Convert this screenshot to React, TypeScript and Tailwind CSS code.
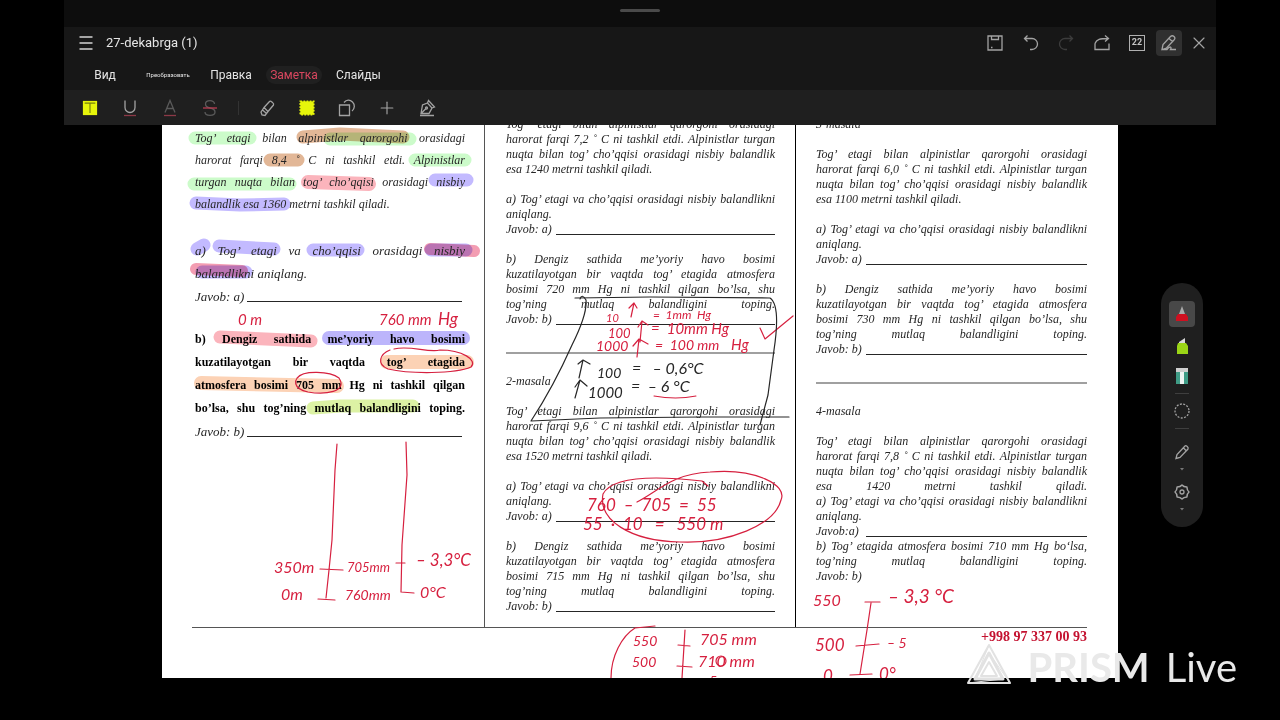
import type { ReactNode } from "react";
import { Plus, X } from "lucide-react";

const MENU = [
  { label: "Вид", className: "w-[42px] text-xs text-neutral-200" },
  { label: "Преобразовать", className: "w-[84px] text-[6px] text-neutral-200" },
  { label: "Правка", className: "w-[42px] text-xs text-neutral-200" },
  { label: "Заметка", className: "w-[84px] text-xs text-[#d9475f]" },
  { label: "Слайды", className: "w-[42px] text-xs text-neutral-200" },
];

function Icon({ children, size = 18 }: { children: ReactNode; size?: number }) {
  return (
    <svg
      width={size}
      height={size}
      viewBox="0 0 18 18"
      fill="none"
      stroke="currentColor"
      strokeWidth="1.3"
      className="shrink-0"
      aria-hidden="true"
    >
      {children}
    </svg>
  );
}

function ToolButton({ label, children, className = "" }: { label: string; children: ReactNode; className?: string }) {
  return (
    <button
      type="button"
      aria-label={label}
      className={`flex size-[26px] shrink-0 items-center justify-center rounded-sm ${className}`}
    >
      {children}
    </button>
  );
}

function Header() {
  return (
    <header className="mx-16 shrink-0 font-['Roboto',sans-serif] text-[#a3a3a3]">
      <div className="flex h-[27px] justify-center bg-[#0d0d0d] pt-[9px]">
        <span className="h-[3px] w-10 rounded-full bg-[#4a4a4a]" />
      </div>

      <div className="flex h-8 items-center bg-[#171717] pr-1 pl-[9px]">
        <ToolButton label="Menu" className="text-[#d4d4d4]">
          <Icon>
            <path d="M2.500 3h13M2.500 9h13M2.500 15h13" strokeWidth="1.5" />
          </Icon>
        </ToolButton>
        <h1 className="ml-[7px] text-[13px] text-neutral-200">27-dekabrga (1)</h1>

        <div className="ml-auto flex w-[168px] justify-between">
          <ToolButton label="Save">
            <Icon>
              <path d="M2 2h14v14H2zM5.500 2v3.500h7V2M5 13.500h1.500" />
            </Icon>
          </ToolButton>
          <ToolButton label="Undo">
            <Icon>
              <path d="M5.500 1.500L2.500 4.500l3 3M2.500 4.500h7.500a5.500 5.500 0 0 1 0 11H8" />
            </Icon>
          </ToolButton>
          <ToolButton label="Redo" className="text-[#3c3c3c]">
            <Icon>
              <path d="M12.500 1.500l3 3-3 3M15.500 4.500H8a5.500 5.500 0 0 0 0 11h2" />
            </Icon>
          </ToolButton>
          <ToolButton label="Share">
            <Icon>
              <path d="M2 9.500v6h14v-6M2 9.500C3.500 5 7 4.500 15 4.500M12 1.500l3.500 3L12 7.500" />
            </Icon>
          </ToolButton>
          <ToolButton label="Pages">
            <span className="flex size-4 items-center justify-center border border-[#b0b0b0] text-[9px] font-bold text-[#c4c4c4]">
              22
            </span>
          </ToolButton>
        </div>
        <ToolButton label="Edit" className="ml-1.5 bg-[#303030]">
          <Icon>
            <path d="M2 15.500l1-5 7.500-8c1-1 2.500-1 3.500 0s1 2.500 0 3.500l-7.500 8zM9 4.500l3.500 3M2 15.500h5c3-4 5-2.500 3.500 0H16" />
          </Icon>
        </ToolButton>
        <ToolButton label="Close" className="ml-1">
          <X size={20} strokeWidth={1.4} />
        </ToolButton>
      </div>

      <nav className="flex h-[31px] items-center bg-[#171717] pl-5">
        {MENU.map((m) => (
          <button key={m.label} type="button" className={`text-center ${m.className}`}>
            {m.label === "Заметка" ? <span className="rounded-full bg-[#202020] px-1 py-0.5">{m.label}</span> : m.label}
          </button>
        ))}
      </nav>

      <div className="flex h-[35px] items-center gap-3.5 bg-[#1f1f1f] pl-[13px]">
        <ToolButton label="Highlight text">
          <Icon size={16}>
            <path d="M1 1h16v16H1z" fill="#e6f50b" stroke="none" />
            <path d="M3 3.500h12M9 3.500v11" stroke="#77800c" />
          </Icon>
        </ToolButton>
        <ToolButton label="Underline">
          <Icon>
            <path d="M4 1.500v7a5 5 0 0 0 10 0v-7" />
            <path d="M3 16.500h12" stroke="#8c3947" />
          </Icon>
        </ToolButton>
        <ToolButton label="Text colour" className="text-[#5a5a5a]">
          <Icon>
            <path d="M4 13.500L9 1.500l5 12M6 9.500h6" />
            <path d="M3 16.500h12" stroke="#8c3947" />
          </Icon>
        </ToolButton>
        <ToolButton label="Strikethrough" className="text-[#5a5a5a]">
          <Icon>
            <path d="M13.500 5c0-4.500-9-4.500-9 0 0 2.500 2 3.500 4.500 4s5 1.500 5 4c0 4.500-10 4.500-10 0" />
            <path d="M2 9h14" stroke="#b83b51" />
          </Icon>
        </ToolButton>
        <span className="mx-px h-3.5 w-px bg-[#333]" />
        <ToolButton label="Marker">
          <Icon>
            <path d="M6 8.500l5.500-6c1-1 5 2 4 3.500L10 12.500zM6 8.500l-3 4.500 1 3 3 .5 3-4M4.500 11l3.500 3" />
          </Icon>
        </ToolButton>
        <ToolButton label="Area highlight">
          <Icon size={16}>
            <path d="M1.500 1.500h15v15h-15z" fill="#e6f50b" stroke="#e6f50b" strokeDasharray="2 1.500" strokeWidth="2" />
          </Icon>
        </ToolButton>
        <ToolButton label="Shapes">
          <Icon>
            <path d="M1.500 6h10v10.500h-10zM6 3.500C8.500.5 12 .5 14.500 3s2.500 6.500-.5 9" />
          </Icon>
        </ToolButton>
        <ToolButton label="Add">
          <Plus size={20} strokeWidth={1.4} />
        </ToolButton>
        <ToolButton label="Signature">
          <Icon>
            <path d="M2 16.500h14M3 14.500l1.500-8.500 5-2 4.500 5-3 5.500zM3 14.500L8 9.500M9.500 4l1-2.500 6 6.500-2.500 1" />
            <circle cx="8.500" cy="9" r="1" />
          </Icon>
        </ToolButton>
      </div>
    </header>
  );
}

/* One printed line, stretched to both edges of its column */
function Line({ children }: { children: ReactNode }) {
  return <span className="block whitespace-nowrap [text-align-last:justify]">{children}</span>;
}

function Paragraph({ lines, last }: { lines: string[]; last?: string }) {
  return (
    <p>
      {lines.map((l) => (
        <Line key={l}>{l}</Line>
      ))}
      {last ? <span className="block">{last}</span> : null}
    </p>
  );
}

function Answer({ label, blank = true, wide = false }: { label: string; blank?: boolean; wide?: boolean }) {
  return (
    <p className="flex">
      <span className={wide ? "w-[52px]" : "w-[50px]"}>{label}</span>
      {blank ? <span className={wide ? "mr-[3px] mb-1.5 flex-1 border-b" : "mb-0.5 flex-1 border-b"} /> : null}
    </p>
  );
}

function Problem({ diff, height }: { diff: string; height: string }) {
  return (
    <Paragraph
      lines={[
        "Tog’ etagi bilan alpinistlar qarorgohi orasidagi",
        `harorat farqi ${diff} ˚ C ni tashkil etdi. Alpinistlar turgan`,
        "nuqta bilan tog’ cho’qqisi orasidagi nisbiy balandlik",
      ]}
      last={`esa ${height} metrni tashkil qiladi.`}
    />
  );
}

function QuestionA() {
  return (
    <Paragraph lines={["a) Tog’ etagi va cho’qqisi orasidagi nisbiy balandlikni"]} last="aniqlang." />
  );
}

function QuestionB({ pressure }: { pressure: string }) {
  return (
    <Paragraph
      lines={[
        "b) Dengiz sathida me’yoriy havo bosimi",
        "kuzatilayotgan bir vaqtda tog’ etagida atmosfera",
        `bosimi ${pressure} mm Hg ni tashkil qilgan bo’lsa, shu`,
        "tog’ning mutlaq balandligini toping.",
      ]}
    />
  );
}

function Separator() {
  return <hr className="mt-[25px] mb-5 h-0.5 border-0 bg-[#a0a0a0]" />;
}

const RED = "#d6203f";
const BLACK = "#262626";

const MARKER = [
  { d: "M195 138H250M330 139H410M415 160H465M194 184L290 184", color: "#ccfbca", width: 13 },
  { d: "M303 137L340 134L403 137M270 160H298", color: "#e2b797", width: 13 },
  { d: "M308 182L369 184", color: "#fbb4bc", width: 14 },
  { d: "M435 180H467M196 203L240 205L284 204", color: "#c3baff", width: 13 },
  { d: "M197 249L204 245M219 246L274 249M313 250H358M431 250H466M202 272H246", color: "#c3baff", width: 13 },
  { d: "M430 249L474 251M196 269L242 271", color: "#f39db2", width: 12 },
  { d: "M220 337L311 341", color: "#fbb4bc", width: 13 },
  { d: "M329 338H463", color: "#bcb5fb", width: 14 },
  { d: "M387 362H467M201 383L337 386", color: "#fcd2b5", width: 14 },
  { d: "M313 408L340 406H413", color: "#dcf2a4", width: 13 },
];

const RED_STROKES = [
  // rings round the marked words
  "M394 349C410 345 428 353 440 350C462 350 478 360 471 367C455 374 410 374 388 369C376 364 380 354 390 350",
  "M297 378C303 370 330 371 339 378C348 392 325 395 308 392C293 389 292 379 303 374",
  // two scales in the first column
  "M337 444L335 470L332 540L329 570L326 598M320 569L343 570M318 599L335 600",
  "M406 442L407 475L402 545L401 592L414 593M396 563H405",
  // arrows and tick beside the conversion notes
  "M631 317L634 303M629 308L634 303L637 308",
  "M640 342L642 321M638 327L642 321L648 325M637 357L639 339M633 346L639 339L648 344",
  "M760 328L765 339L793 316M654 396Q676 400 696 396",
  // loop round the subtraction
  "M637 502C660 490 672 474 710 472C755 468 788 485 781 500C775 525 728 544 680 542C630 541 598 520 603 494C612 477 650 475 702 481L708 486",
  // scales at the foot of the sheet
  "M655 626L635 628C622 636 611 656 611 678M685 630L682 678M678 645L690 646M677 666L692 667",
  "M865 602H880M871 603L867 630L860 674M856 646L879 644M850 675L872 674",
];

const BLACK_STROKES = [
  "M575 298L650 297L770 298C779 304 777 330 774 350L768 395L760 425",
  "M789 417L700 417L600 418L531 421C548 395 560 372 572 345C582 325 587 310 586 300Q582 293 580 299",
  "M579 378L583 360M578 364L583 360L590 364M575 398L580 380M575 387L580 380L587 386",
];

const NOTES = [
  { t: "0 m", x: 238, y: 325, s: 15 },
  { t: "760 mm", x: 379, y: 325, s: 15 },
  { t: "Hg", x: 438, y: 325, s: 17 },
  { t: "350m", x: 274, y: 573, s: 16 },
  { t: "0m", x: 281, y: 600, s: 16 },
  { t: "705mm", x: 347, y: 572, s: 13 },
  { t: "760mm", x: 345, y: 600, s: 14 },
  { t: "– 3,3°C", x: 416, y: 566, s: 17 },
  { t: "0°C", x: 420, y: 598, s: 16 },
  { t: "10", x: 606, y: 322, s: 11 },
  { t: "=  1mm  Hg", x: 653, y: 319, s: 12 },
  { t: "100", x: 608, y: 338, s: 13 },
  { t: "=  10mm Hg", x: 651, y: 334, s: 15 },
  { t: "1000", x: 596, y: 351, s: 14 },
  { t: "=  100 mm", x: 655, y: 350, s: 14 },
  { t: "Hg", x: 731, y: 350, s: 15 },
  { t: "760  –  705  =  55", x: 587, y: 511, s: 17 },
  { t: "55  ·  10   =   550 m", x: 583, y: 530, s: 17 },
  { t: "550", x: 633, y: 646, s: 14 },
  { t: "705 mm", x: 700, y: 645, s: 16 },
  { t: "500", x: 632, y: 667, s: 14 },
  { t: "710 mm", x: 698, y: 667, s: 16 },
  { t: "5", x: 709, y: 686, s: 14 },
  { t: "550", x: 813, y: 606, s: 16 },
  { t: "– 3,3 °C", x: 888, y: 603, s: 19 },
  { t: "500", x: 815, y: 651, s: 17 },
  { t: "– 5", x: 887, y: 648, s: 14 },
  { t: "0", x: 823, y: 682, s: 17 },
  { t: "0°", x: 879, y: 680, s: 17 },
];

const BLACK_NOTES = [
  { t: "100", x: 597, y: 378, s: 14 },
  { t: "=   – 0,6°C", x: 632, y: 374, s: 16 },
  { t: "1000", x: 588, y: 398, s: 15 },
  { t: "=  – 6 °C", x: 631, y: 392, s: 16 },
];

/* Ink is stored in screen units, so the layer is moved back by the sheet's origin */
function MarkerLayer() {
  return (
    <svg className="pointer-events-none absolute inset-0 size-full" aria-hidden="true">
      <g transform="translate(-162 -125)" fill="none" strokeLinecap="round" strokeLinejoin="round">
        {MARKER.map((m) => (
          <path key={m.d} d={m.d} stroke={m.color} strokeWidth={m.width} className="mix-blend-multiply" />
        ))}
      </g>
    </svg>
  );
}

function InkLayer() {
  return (
    <svg className="pointer-events-none absolute inset-0 size-full font-['Lato',sans-serif] italic">
      <g transform="translate(-162 -125)">
        <g fill="none" strokeWidth="1.2" strokeLinecap="round" strokeLinejoin="round">
          {RED_STROKES.map((d) => (
            <path key={d} d={d} stroke={RED} />
          ))}
          <circle cx="721" cy="661" r="5" stroke={RED} />
          {BLACK_STROKES.map((d) => (
            <path key={d} d={d} stroke={BLACK} />
          ))}
        </g>
        {NOTES.map((n) => (
          <text key={`${n.x}-${n.y}`} x={n.x} y={n.y} fontSize={n.s} fill={RED} className="whitespace-pre">
            {n.t}
          </text>
        ))}
        {BLACK_NOTES.map((n) => (
          <text key={`${n.x}-${n.y}`} x={n.x} y={n.y} fontSize={n.s} fill={BLACK} className="whitespace-pre">
            {n.t}
          </text>
        ))}
      </g>
    </svg>
  );
}

function Sheet() {
  return (
    <main className="relative mx-[162px] mb-[42px] min-h-0 flex-1 overflow-hidden bg-white font-['Liberation_Serif',serif] text-xs text-[#262626]">
      <MarkerLayer />
      <div className="relative mr-[31px] ml-[30px]">
        <div className="grid grid-cols-[292fr_311fr_292fr] border-b border-[#555] italic">
          <section className="pt-0.5 pr-[19px] pl-[3px]">
            <div className="leading-[22px]">
              <Line>Tog’ etagi bilan alpinistlar qarorgohi orasidagi</Line>
              <Line>harorat farqi 8,4 ˚ C ni tashkil etdi. Alpinistlar</Line>
              <Line>turgan nuqta bilan tog’ cho’qqisi orasidagi nisbiy</Line>
              <p>balandlik esa 1360 metrni tashkil qiladi.</p>
            </div>
            <div className="mt-6 text-[13px] leading-[23px]">
              <Line>a) Tog’ etagi va cho’qqisi orasidagi nisbiy</Line>
              <p>balandlikni aniqlang.</p>
              <Answer label="Javob: a)" wide />
            </div>
            <div className="mt-5 leading-[23px]">
              <div className="font-bold text-black not-italic">
                <Line>b) Dengiz sathida me’yoriy havo bosimi</Line>
                <Line>kuzatilayotgan bir vaqtda tog’ etagida</Line>
                <Line>atmosfera bosimi 705 mm Hg ni tashkil qilgan</Line>
                <Line>bo’lsa, shu tog’ning mutlaq balandligini toping.</Line>
              </div>
              <div className="text-[13px]">
                <Answer label="Javob: b)" wide />
              </div>
            </div>
          </section>

          <section className="border-l border-[#555] pr-5 pb-[13px] pl-[21px] leading-[15px]">
            <div className="-mt-2 flex flex-col gap-[15px]">
              <Problem diff="7,2" height="1240" />
              <div>
                <QuestionA />
                <Answer label="Javob: a)" />
              </div>
              <div>
                <QuestionB pressure="720" />
                <Answer label="Javob: b)" />
              </div>
            </div>
            <Separator />
            <div className="flex flex-col gap-[15px]">
              <h2>2-masala</h2>
              <Problem diff="9,6" height="1520" />
              <div>
                <QuestionA />
                <Answer label="Javob: a)" />
              </div>
              <div>
                <QuestionB pressure="715" />
                <Answer label="Javob: b)" />
              </div>
            </div>
          </section>

          <section className="border-l border-black pl-5 leading-[15px]">
            <div className="-mt-2 flex flex-col gap-[15px]">
              <h2>3-masala</h2>
              <Problem diff="6,0" height="1100" />
              <div>
                <QuestionA />
                <Answer label="Javob: a)" />
              </div>
              <div>
                <QuestionB pressure="730" />
                <Answer label="Javob: b)" />
              </div>
            </div>
            <Separator />
            <div className="flex flex-col gap-[15px]">
              <h2>4-masala</h2>
              <div>
                <Paragraph
                  lines={[
                    "Tog’ etagi bilan alpinistlar qarorgohi orasidagi",
                    "harorat farqi 7,8 ˚ C ni tashkil etdi. Alpinistlar turgan",
                    "nuqta bilan tog’ cho’qqisi orasidagi nisbiy balandlik",
                    "esa 1420 metrni tashkil qiladi.",
                  ]}
                />
                <QuestionA />
                <Answer label="Javob:a)" />
                <Paragraph
                  lines={[
                    "b) Tog’ etagida atmosfera bosimi 710 mm Hg bo‘lsa,",
                    "tog’ning mutlaq balandligini toping.",
                  ]}
                />
                <Answer label="Javob: b)" blank={false} />
              </div>
            </div>
          </section>
        </div>
        <p className="text-right text-sm leading-[17px] font-bold text-[#c41230]">+998 97 337 00 93</p>
      </div>
      <InkLayer />
    </main>
  );
}

function Palette() {
  return (
    <aside className="absolute top-[283px] right-[77px] flex w-[42px] flex-col items-center rounded-full bg-[#1f1f1f] pt-[18px] pb-4 text-[#a3a3a3]">
      <ToolButton label="Pen" className="bg-[#484848]">
        <Icon>
          <path d="M9 1l3 8H6z" fill="#a8a8a8" stroke="none" />
          <path d="M5 9h8l2 3v4H3v-4z" fill="#cf1020" stroke="none" />
        </Icon>
      </ToolButton>
      <ToolButton label="Highlighter" className="mt-1.5">
        <Icon>
          <path d="M6 5l6-4v5H6z" fill="#d8d8d8" stroke="none" />
          <path d="M5 6h8l2 3v8H4V9z" fill="#9ad516" stroke="none" />
        </Icon>
      </ToolButton>
      <ToolButton label="Eraser" className="mt-1">
        <Icon>
          <path d="M3 1h12v4H3z" fill="#cfcfcf" stroke="none" />
          <path d="M3 5h12v12H3z" fill="#3f9c86" stroke="none" />
          <path d="M7 5h4v12H7z" fill="#eef5f3" stroke="none" />
        </Icon>
      </ToolButton>
      <span className="mt-1 h-px w-3.5 bg-[#3f3f3f]" />
      <ToolButton label="Lasso" className="mt-1">
        <Icon>
          <circle cx="9" cy="9" r="7" strokeDasharray="2 1.400" />
        </Icon>
      </ToolButton>
      <span className="mt-1 h-px w-3.5 bg-[#3f3f3f]" />
      <ToolButton label="Pencil" className="mt-2.5">
        <Icon>
          <path d="M3 15.500l1-4 8-8.500c1-1 4 1.500 3 3L7 14.500zM10.500 5L13 7.500" />
        </Icon>
      </ToolButton>
      <svg width="6" height="4" viewBox="0 0 6 4" className="mt-0.5 fill-[#777]" aria-hidden="true">
        <path d="M1 1h4L3 3.500z" />
      </svg>
      <ToolButton label="Settings" className="mt-2">
        <Icon>
          <path
            d="M9 2Q10.500 4 13.900 4.100 14 7.500 16 9 14 10.500 13.900 13.900 10.500 14 9 16 7.500 14 4.100 13.900 4 10.500 2 9 4 7.500 4.100 4.100 7.500 4 9 2z"
            strokeLinejoin="round"
            strokeWidth="1.5"
          />
          <circle cx="9" cy="9" r="2" />
        </Icon>
      </ToolButton>
      <svg width="6" height="4" viewBox="0 0 6 4" className="mt-0.5 fill-[#777]" aria-hidden="true">
        <path d="M1 1h4L3 3.500z" />
      </svg>
    </aside>
  );
}

function Watermark() {
  return (
    <div className="pointer-events-none absolute right-[43px] bottom-[29px] flex items-start gap-4 font-['Lato',sans-serif] text-[40px] leading-[48px] text-[#e9e9e9]">
      <svg width="46" height="42" viewBox="0 0 46 42" fill="none" stroke="#e2e2e2" strokeLinejoin="round" aria-hidden="true">
        <path d="M23 2L44 40H2z" strokeWidth="2" />
        <path d="M23 10L37 36H9z" strokeWidth="3" />
        <path d="M23 19L31 33H15z" strokeWidth="2" />
        <path d="M23 2L9 36M44 40L23 10M2 40L37 36" strokeWidth="1" />
      </svg>
      <p className="flex gap-4">
        <span className="font-bold">PRISM</span>
        <span>Live</span>
      </p>
    </div>
  );
}

export default function App() {
  return (
    <div className="relative flex h-screen flex-col overflow-hidden bg-black">
      <Header />
      <Sheet />
      <Palette />
      <Watermark />
    </div>
  );
}
